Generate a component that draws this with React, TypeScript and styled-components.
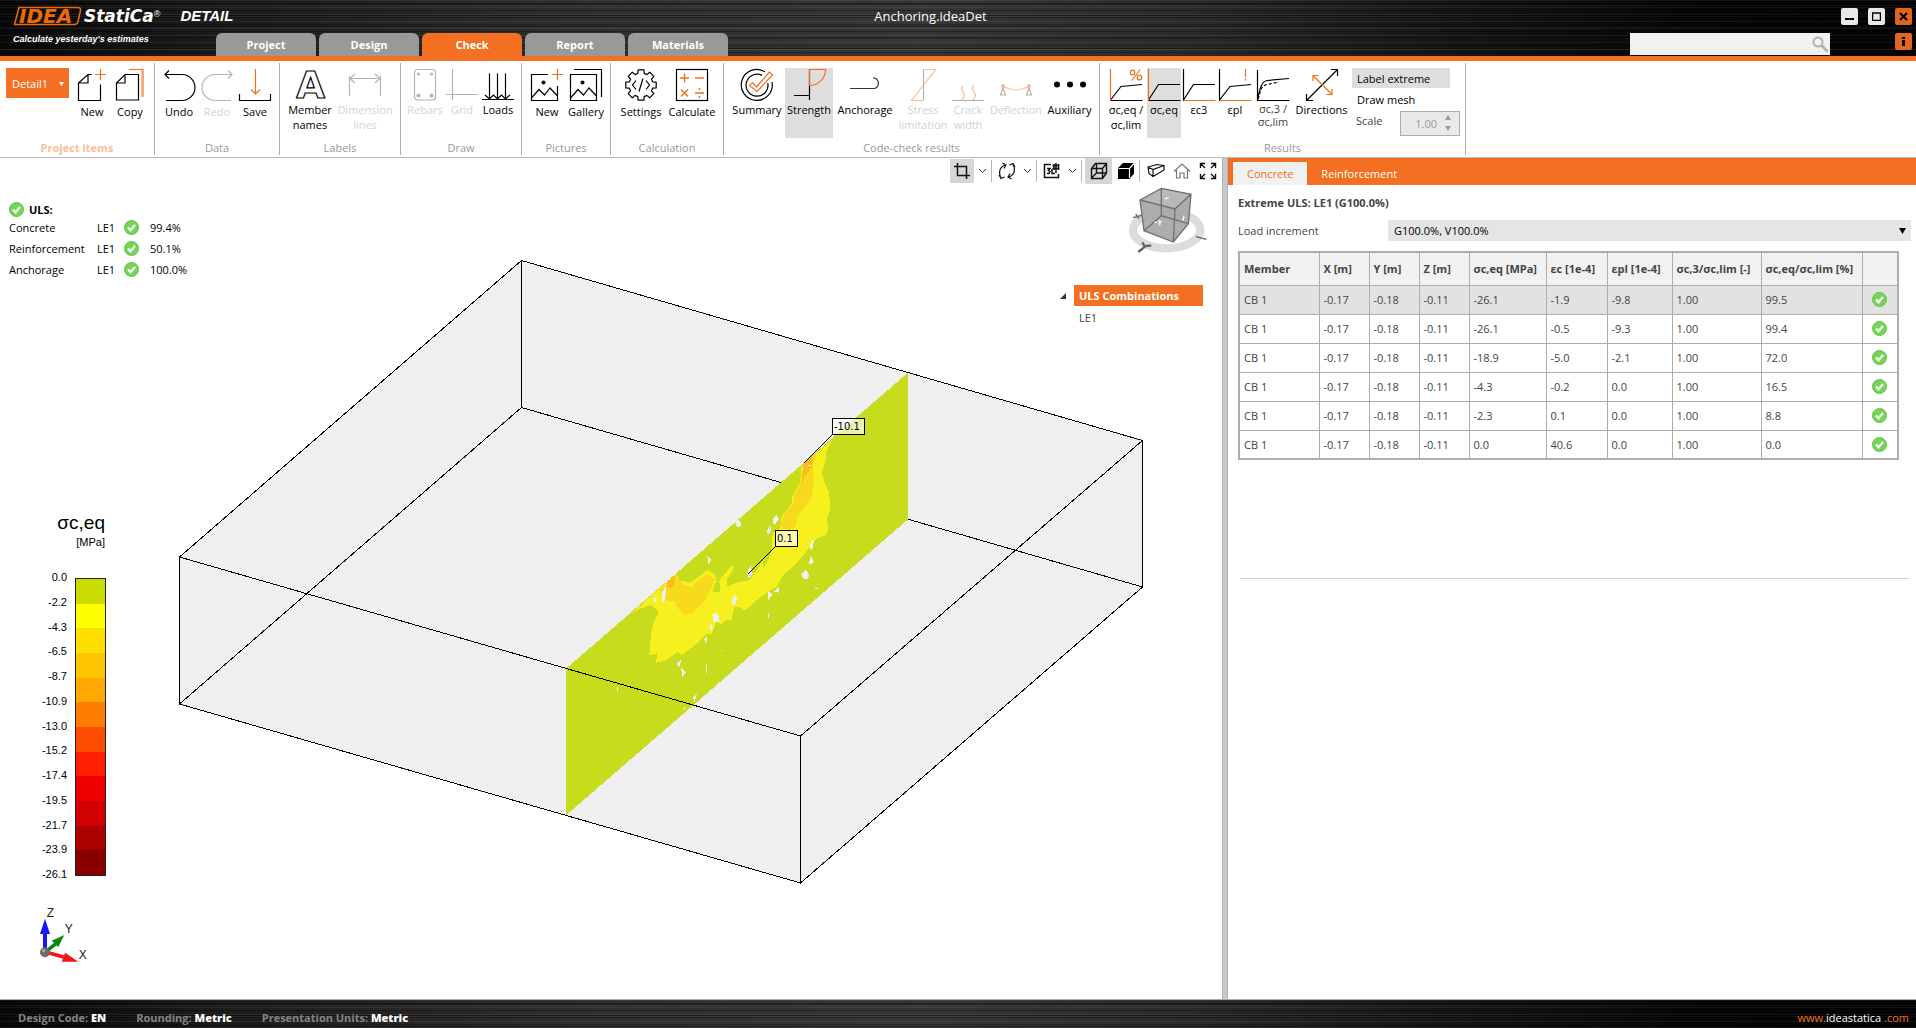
import React from "react";
import styled, { createGlobalStyle, css } from "styled-components";

const ORANGE = "#f36f21";
const PALE = "#f9bf9b";
const UI_FONT = '"Open Sans", "Noto Sans", sans-serif';

const GlobalStyle = createGlobalStyle`
  *, *::before, *::after { box-sizing: border-box; }
  body { margin: 0; background: #fff; color: #000; font: 11px/15px ${UI_FONT}; }
  button, input, select { font: inherit; color: inherit; margin: 0; }
  button { background: none; border: 0; padding: 0; cursor: pointer; }
  svg { display: block; flex: none; }
`;

const brushed = css`
  background:
    repeating-linear-gradient(180deg, rgba(255,255,255,.06) 0 1px, transparent 1px 3px, rgba(0,0,0,.3) 3px 4px, transparent 4px 7px),
    repeating-linear-gradient(180deg, transparent 0 4px, rgba(0,0,0,.4) 4px 5px, rgba(255,255,255,.05) 5px 6px, transparent 6px 11px),
    linear-gradient(90deg, #070707 0%, #1a1a1a 10%, #2e2e2e 30%, #363636 48%, #2a2a2a 62%, #151515 76%, #060606 88%, #030303 100%);
`;

const Page = styled.div`
  display: flex;
  flex-direction: column;
  min-height: 100vh;
`;

/* ---------- header ---------- */
const Header = styled.header`
  ${brushed}
  color: #fff;
  border-bottom: 5px solid ${ORANGE};
`;
const TitleRow = styled.div`
  display: flex;
  height: 33px;
`;
const Brand = styled.div`
  display: flex;
  width: 240px;
  padding: 6px 0 0 13px;
`;
const ProductName = styled.span`
  margin-left: 20px;
  font: italic bold 15px/20px "Liberation Sans", Arial, sans-serif;
`;
const BrandName = styled.span`
  margin-left: 2px;
  font: italic bold 17px/20px "DejaVu Sans", sans-serif;
  sup { font: 9px/9px "Liberation Sans", Arial, sans-serif; vertical-align: 5px; }
`;
const Title = styled.h1`
  flex: 1;
  margin: 0;
  font-size: 13px;
  font-weight: 400;
  line-height: 33px;
  text-align: center;
`;
const WindowControls = styled.div`
  display: flex;
  justify-content: flex-end;
  gap: 10px;
  width: 295px;
  padding: 8px 4px 0 0;
`;
const WindowButton = styled.button<{ $accent?: boolean }>`
  display: grid;
  place-items: center;
  width: 17px;
  height: 17px;
  border-radius: 2px;
  background: ${(p) => (p.$accent ? "#e0651f" : "#e8e8e8")};
`;
const TabRow = styled.div`
  display: flex;
  height: 23px;
`;
const Tagline = styled.div`
  width: 216px;
  padding-left: 13px;
  font: italic bold 9px/12px "Liberation Sans", Arial, sans-serif;
`;
const MainTabs = styled.nav`
  display: flex;
  flex: 1;
  gap: 3px;
`;
const MainTab = styled.button<{ $active?: boolean }>`
  width: 100px;
  border-radius: 6px 6px 0 0;
  background: ${(p) => (p.$active ? ORANGE : "#999")};
  color: #fff;
  font-weight: 700;
`;
const SearchBox = styled.label`
  display: flex;
  align-items: center;
  width: 200px;
  height: 22px;
  padding-right: 1px;
  background: #f1f1f1;
  input { flex: 1; min-width: 0; border: 0; background: none; color: #222; outline: 0; }
`;
const InfoSlot = styled.div`
  width: 86px;
  padding: 0 4px 0 65px;
`;

/* ---------- ribbon ---------- */
const Ribbon = styled.div`
  display: flex;
  height: 97px;
  padding: 2px 0;
  border-bottom: 1px solid #bbb;
`;
const Group = styled.section`
  display: flex;
  flex-direction: column;
  justify-content: space-between;
  height: 92px;
  padding: 5px 5px 0;
  border-right: 1px solid #b0b0b0;
`;
const GroupTools = styled.div`
  display: flex;
`;
const Caption = styled.h2<{ $accent?: boolean }>`
  margin: 0;
  font-size: 11px;
  line-height: 15px;
  font-weight: ${(p) => (p.$accent ? 700 : 400)};
  color: ${(p) => (p.$accent ? PALE : "#999")};
  text-align: center;
`;
const ToolButton = styled.button<{ $w: number; $on?: boolean; $low?: boolean; $dim?: boolean; $tight?: boolean }>`
  display: flex;
  flex-direction: column;
  align-items: center;
  gap: ${(p) => (p.$low ? 3 : 1)}px;
  width: ${(p) => p.$w}px;
  height: 70px;
  padding-top: 1px;
  background: ${(p) => (p.$on ? "#dedede" : "transparent")};
  color: ${(p) => (p.$dim ? "#d2d2d2" : p.$tight ? "#444" : "#000")};
  line-height: ${(p) => (p.$tight ? 13 : 15)}px;
  white-space: nowrap;
  svg { overflow: visible; }
`;
const ItemPicker = styled.label`
  position: relative;
  display: block;
  height: 30px;
  margin: 0 4px 0 1px;
  select {
    width: 63px;
    height: 30px;
    padding: 0 6px;
    appearance: none;
    border: 0;
    background: ${ORANGE};
    color: #fff;
  }
  svg { position: absolute; right: 5px; top: 14px; }
`;
const ResultOptions = styled.div`
  display: flex;
  flex-direction: column;
  width: 108px;
  margin-left: 2px;
`;
const OptionButton = styled.button<{ $on?: boolean }>`
  width: 98px;
  height: ${(p) => (p.$on ? 20 : 23)}px;
  padding-left: 5px;
  text-align: left;
  background: ${(p) => (p.$on ? "#dedede" : "transparent")};
`;
const ScaleRow = styled.label`
  display: flex;
  justify-content: space-between;
  padding-left: 4px;
  color: #444;
  line-height: 20px;
`;
const Spinner = styled.span`
  display: flex;
  width: 60px;
  height: 25px;
  border: 1px solid #adadad;
  background: #e9e9e9;
  input { width: 44px; padding: 0 8px 0 0; border: 0; background: none; color: #9a9a9a; text-align: right; }
`;
const SpinnerArrows = styled.span`
  display: flex;
  flex-direction: column;
  justify-content: space-around;
  padding: 1px 0;
`;

/* ---------- workspace ---------- */
const Workspace = styled.main`
  display: flex;
  flex: 1;
`;
const Viewer = styled.section`
  position: relative;
  display: flex;
  flex: 1222 1 0;
  min-width: 0;
  background: #fff;
`;
const SceneLayer = styled.svg`
  position: absolute;
  inset: 0;
  width: 100%;
  height: 100%;
`;
const Overlay = styled.div`
  position: relative;
  display: flex;
  flex: 1;
  flex-direction: column;
  justify-content: space-between;
`;
const ViewToolbar = styled.div`
  display: flex;
  align-items: center;
  justify-content: flex-end;
  height: 26px;
  padding-right: 1px;
`;
const ViewButton = styled.button<{ $w?: number; $on?: boolean }>`
  display: grid;
  place-items: center;
  width: ${(p) => p.$w ?? 24}px;
  height: ${(p) => ((p.$w ?? 24) > 24 ? 26 : 24)}px;
  background: ${(p) => (p.$on ? "#d6d6d6" : "transparent")};
`;
const ChevronButton = styled.button`
  display: grid;
  place-items: center;
  width: 17px;
  height: 24px;
`;
const Divider = styled.span`
  width: 1px;
  height: 22px;
  margin-right: 3px;
  background: #b4b4b4;
`;
const TopArea = styled.div`
  display: flex;
  justify-content: space-between;
`;
const Summary = styled.div`
  padding: 18px 0 0 9px;
`;
const SummaryHead = styled.div`
  display: flex;
  gap: 5px;
  height: 15px;
  font-weight: 700;
`;
const SummaryRow = styled.div`
  display: grid;
  grid-template-columns: 88px 27px 26px auto;
  align-items: center;
  height: 21px;
`;
const RightTools = styled.div`
  display: flex;
  flex-direction: column;
  align-items: flex-end;
  padding: 2px 14px 0 0;
`;
const Combos = styled.div`
  display: grid;
  grid-template-columns: 14px 129px;
  align-items: center;
  margin: 31px 5px 0 0;
`;
const ComboHead = styled.button`
  grid-column: 2;
  height: 21px;
  padding-left: 5px;
  background: ${ORANGE};
  color: #fff;
  font-weight: 700;
  text-align: left;
`;
const ComboItem = styled.button`
  grid-column: 2;
  height: 23px;
  padding-left: 5px;
  color: #444;
  text-align: left;
`;
const LegendArea = styled.div`
  padding: 0 0 34px 37px;
  font-family: "Liberation Sans", Arial, sans-serif;
`;
const LegendTitle = styled.div`
  width: 68px;
  text-align: right;
  font-size: 19px;
  line-height: 24px;
  small { display: block; font-size: 11px; line-height: 15px; }
`;
const LegendBody = styled.div`
  display: flex;
  gap: 8px;
  margin-top: 20px;
`;
const LegendLabels = styled.ol`
  display: flex;
  flex-direction: column;
  justify-content: space-between;
  width: 30px;
  height: 312px;
  margin: 0;
  padding: 0;
  list-style: none;
  text-align: right;
`;
const LegendBar = styled.div`
  display: flex;
  flex-direction: column;
  width: 31px;
  height: 298px;
  margin-top: 8px;
  border: 1px solid #222;
`;
const Swatch = styled.div<{ $c: string }>`
  flex: 1;
  background: ${(p) => p.$c};
`;
const Triad = styled.svg`
  margin-top: 26px;
  overflow: visible;
`;
const Splitter = styled.div`
  width: 6px;
  background: #c9c9c9;
  border: solid #b3b3b3;
  border-width: 0 1px;
`;

/* ---------- results panel ---------- */
const Panel = styled.aside`
  flex: 688 1 0;
  min-width: 0;
  color: #444;
`;
const PanelTabs = styled.nav`
  display: flex;
  height: 27px;
  padding: 4px 0 0 5px;
  background: ${ORANGE};
`;
const PanelTab = styled.button<{ $active?: boolean }>`
  padding: 0 14px;
  background: ${(p) => (p.$active ? "#f1f1f1" : "transparent")};
  color: ${(p) => (p.$active ? ORANGE : "#fff")};
`;
const PanelBody = styled.div`
  padding: 10px 5px 0 10px;
`;
const PanelHeading = styled.h2`
  margin: 0;
  font-size: 11px;
  line-height: 15px;
`;
const LoadRow = styled.label`
  display: flex;
  align-items: center;
  margin-top: 10px;
  > span:first-child { width: 150px; }
`;
const SelectWrap = styled.span`
  position: relative;
  flex: 1;
  select {
    display: block;
    width: 100%;
    height: 21px;
    padding: 0 6px;
    appearance: none;
    border: 0;
    background: #e5e5e5;
    color: #000;
  }
  svg { position: absolute; right: 5px; top: 8px; }
`;
const ResultTable = styled.table`
  width: 659px;
  margin-top: 10px;
  border: 2px solid #adadad;
  border-collapse: collapse;
  table-layout: fixed;
  th, td { border: 1px solid #adadad; padding: 0 4px; text-align: left; white-space: nowrap; }
  th { height: 33px; background: #f1f1f1; }
  td { height: 29px; }
  td svg { margin: 0 auto; }
`;
const BodyRow = styled.tr<{ $selected: boolean }>`
  background: ${(p) => (p.$selected ? "#e2e2e2" : "#fff")};
`;
const Rule = styled.hr`
  margin: 118px 2px 0;
  border: 0;
  border-top: 1px solid #d0d0d0;
`;

/* ---------- footer ---------- */
const Footer = styled.footer`
  ${brushed}
  display: flex;
  align-items: center;
  gap: 30px;
  height: 29px;
  padding: 6px 7px 0 18px;
  border-top: 1px solid #aaa;
  color: #858585;
  font-weight: 700;
  b { color: #fff; }
`;
const SiteLink = styled.a`
  margin-left: auto;
  color: ${ORANGE};
  font-weight: 400;
  text-decoration: none;
  span { color: #fff; }
`;

/* ---------- icons ---------- */
const Ico = ({ c = "#000", children }: { c?: string; children: React.ReactNode }) => (
  <svg width="32" height="32" viewBox="0 0 32 32" fill="none" stroke={c} strokeWidth="1.2" aria-hidden="true">{children}</svg>
);
const G = "#b4b4b4";
const gearPath = (() => {
  const pts: string[] = [];
  for (let i = 0; i < 8; i++) {
    const a = (i * Math.PI) / 4 - Math.PI / 2;
    [[-0.27, 12], [-0.19, 15.5], [0.19, 15.5], [0.27, 12]].forEach(([d, r]) =>
      pts.push(`${(16 + r * Math.cos(a + d)).toFixed(1)} ${(16 + r * Math.sin(a + d)).toFixed(1)}`)
    );
  }
  return `M${pts.join("L")}Z`;
})();
const picture = <><path d="M.5 29L8 20.500l5.500 5.500L19 19l7.500 8" /><circle cx="12.500" cy="13.500" r="2" fill="#000" stroke="none" /></>;

const icons: Record<string, React.ReactNode> = {
  newDoc: <Ico><path d="M15.500 5.500H12L2.500 14v17.500h22V15.500M12 5.500V14H2.500" /><path d="M24.500 0v11M19 5.500h11" stroke={ORANGE} /></Ico>,
  copy: <Ico><path d="M24.500 5.500H11L2.500 14v17h22zM11 5.500V14H2.500" /><path d="M15 .500h14V28" stroke={ORANGE} /><path d="M27.500 1v27" stroke={PALE} /></Ico>,
  undo: <Ico><path d="M2 5.500h17a13 13 0 0 1 0 26H3M6 1.500l-4 4 4 4" /></Ico>,
  redo: <Ico c={G}><path d="M31 5.500H14a13 13 0 0 0 0 26h16M27 1.500l4 4-4 4" /></Ico>,
  save: <Ico><path d="M.500 25v6.500h31V25" /><path d="M16.500 0v25M12 20.500l4.500 4.500 4.500-4.500" stroke={ORANGE} /></Ico>,
  member: <Ico><text x="16.500" y="29" textAnchor="middle" fontFamily="DejaVu Sans" fontWeight="700" fontSize="37">A</text></Ico>,
  dimension: <Ico c={G}><path d="M.500 7v20M31.500 7v20M1 9.500h30M6 5L1 9.500 6 14M26 5l5 4.500-5 4.500" /></Ico>,
  rebars: <Ico c={G}><rect x="5.500" y=".500" width="21" height="30.500" rx="3" /><circle cx="9.500" cy="5" r="1" /><circle cx="22.500" cy="5" r="1" /><circle cx="9.500" cy="26.500" r="1.500" fill={G} /><circle cx="22.500" cy="26.500" r="1.500" fill={G} /></Ico>,
  grid: <Ico c={G}><path d="M6.500 0v31M0 25.500h32" /></Ico>,
  loads: <Ico><path d="M0 30.500h32M7.500 4.500v25M15.500 4.500v25M23.500 4.500v25M3 26l4.500 4 4-4 4 4 4-4 4 4 4.500-4" /></Ico>,
  picNew: <Ico><path d="M17 5.500H.500v26h26V17" />{picture}<path d="M26.500 0v11M21 5.500h11" stroke={ORANGE} /></Ico>,
  gallery: <Ico><path d="M.500 5.500h26v26H.500zM4 .500h27.500V28" />{picture}</Ico>,
  settings: <Ico><path d={gearPath} strokeLinejoin="round" /><path d="M11 11.500L7.500 16l3.500 4.500M21 11.500l3.500 4.500-3.500 4.500M18 9.500l-4 13" /></Ico>,
  calculate: <Ico><rect x=".500" y=".500" width="31" height="31" /><path d="M8.500 4.500v9M4 9h9M19 9h9M5 20.500l7 7M12 20.500l-7 7M19 24h9M23.500 19v2M23.500 27v2" stroke={ORANGE} strokeWidth="1.400" /></Ico>,
  summary: <Ico><path d="M24 2.800A15.500 15.500 0 1 0 31 13M21 6.400A11 11 0 1 0 26.800 14" /><path d="M8.500 16.500l3-3 4 4.500L28.500 3l3 3L16 22.500z" stroke={ORANGE} /></Ico>,
  strength: <Ico><path d="M16.500 0v31M1 26.500h15.500" /><path d="M16.500 .500h16a16 16 0 0 1-16 16z" stroke={ORANGE} /></Ico>,
  anchorage: <Ico><path d="M1 19.500h24.500a5.500 5.500 0 0 0 0-10.500H24" stroke="#333" /></Ico>,
  stress: <Ico c={PALE}><path d="M16.500 .500h12l-24 31h12" /><path d="M16.500 0v31" stroke={G} /></Ico>,
  crack: <Ico c={PALE}><path d="M11 17q-3 3 0 6t-1 8M22 16q-3 3.500 0 7t-1 8" /><path d="M0 31.500h32" stroke={G} /></Ico>,
  deflection: <Ico c={PALE}><path d="M3 17q13 8 26 0" /><circle cx="3" cy="17" r="1.500" fill={PALE} /><circle cx="29" cy="17" r="1.500" fill={PALE} /><path d="M3 19l-2.500 7h5zM29 19l-2.500 7h5z" stroke={G} /></Ico>,
  auxiliary: <Ico><g fill="#000" stroke="none"><circle cx="3" cy="15.500" r="3" /><circle cx="16" cy="15.500" r="3" /><circle cx="29" cy="15.500" r="3" /></g></Ico>,
  ratio: <Ico><path d="M.500 31L11 17.500 32 15.500M.500 31.500h32" /><path d="M.500 0v31" stroke={ORANGE} /><g stroke={ORANGE}><circle cx="22.500" cy="3.500" r="2.300" /><circle cx="29.500" cy="8.500" r="2.300" /><path d="M30 .500l-8 11" /></g></Ico>,
  sigma: <Ico><path d="M.500 31L10.500 15.500H32M.500 31.500h32" /><path d="M.500 0v31" stroke={ORANGE} /></Ico>,
  epsC: <Ico><path d="M.500 0v31L10.500 15.500H32" /><path d="M.500 31.500h32" stroke={ORANGE} /></Ico>,
  epsPl: <Ico><path d="M.500 0v31L11 17.500 32 15.500" /><path d="M.500 31.500h32M26.500 0v8M26.500 9.500v2" stroke={ORANGE} /></Ico>,
  limit: <Ico><path d="M.500 1v30.500h32M.500 31C3 18 5 12.500 10 11.500L32 9.500" /><path d="M1 30c3-8 2-13 9-14.500L22 13" strokeDasharray="3 2" /></Ico>,
  directions: <Ico><path d="M.500 31.500L31.500 .500M.500 25v6.500H7M25 .500h6.500V7" /><path d="M7 6.500L26 25.500M7 12V6.500h5.500M26 20v5.500h-5.500" stroke={ORANGE} /></Ico>,
};

const Check = () => (
  <svg width="15" height="15" viewBox="0 0 15 15" role="img" aria-label="OK">
    <circle cx="7.500" cy="7.500" r="7" fill="#76d552" stroke="#62bf55" />
    <path d="M4 7.500l2.500 2.800L11 5" fill="none" stroke="#fff" strokeWidth="2.200" />
  </svg>
);
const Down = ({ c, w = 7 }: { c: string; w?: number }) => (
  <svg width={w} height={w} viewBox="0 0 7 7" aria-hidden="true"><path d="M0 0h7L3.500 6z" fill={c} /></svg>
);
const Chevron = () => (
  <ChevronButton aria-label="More">
    <svg width="9" height="6" viewBox="0 0 9 6" fill="none" stroke="#333"><path d="M1 1l3.500 3.500L8 1" /></svg>
  </ChevronButton>
);
const V = ({ children, c = "#111" }: { children: React.ReactNode; c?: string }) => (
  <svg width="18" height="18" viewBox="0 0 18 18" fill="none" stroke={c} strokeWidth="1.200" aria-hidden="true">{children}</svg>
);

/* ---------- data ---------- */
type Tool = { icon: string; label: string[]; w: number; low?: boolean; dim?: boolean; on?: boolean; tight?: boolean };
const t = (icon: string, label: string, w: number, o: Partial<Tool> = {}): Tool => ({ icon, label: label.split("|"), w, ...o });
const low = { low: true };
const dim = { dim: true };

const groups: { name: string; tools: Tool[] }[] = [
  { name: "Project items", tools: [t("newDoc", "New", 38, low), t("copy", "Copy", 38, low)] },
  { name: "Data", tools: [t("undo", "Undo", 38, low), t("redo", "Redo", 38, { low: true, dim: true }), t("save", "Save", 38, low)] },
  { name: "Labels", tools: [t("member", "Member|names", 50), t("dimension", "Dimension|lines", 60, dim)] },
  { name: "Draw", tools: [t("rebars", "Rebars", 38, dim), t("grid", "Grid", 36, dim), t("loads", "Loads", 36)] },
  { name: "Pictures", tools: [t("picNew", "New", 40, low), t("gallery", "Gallery", 38, low)] },
  { name: "Calculation", tools: [t("settings", "Settings", 50, low), t("calculate", "Calculate", 52, low)] },
  {
    name: "Code-check results",
    tools: [
      t("summary", "Summary", 56), t("strength", "Strength", 48, { on: true }), t("anchorage", "Anchorage", 64),
      t("stress", "Stress|limitation", 52, dim), t("crack", "Crack|width", 38, dim), t("deflection", "Deflection", 58, dim),
      t("auxiliary", "Auxiliary", 49),
    ],
  },
  {
    name: "Results",
    tools: [
      t("ratio", "σc,eq /|σc,lim", 42), t("sigma", "σc,eq", 34, { on: true }), t("epsC", "εc3", 36), t("epsPl", "εpl", 36),
      t("limit", "σc,3 /|σc,lim", 40, { tight: true }), t("directions", "Directions", 57),
    ],
  },
];

const legend = ["#c8dc00", "#ffff00", "#ffdf00", "#ffc600", "#ffa800", "#ff7e00", "#ff4d00", "#ff1e00", "#f20000", "#d20000", "#ad0000", "#8a0000"];
const legendLabels = ["0.0", "-2.2", "-4.3", "-6.5", "-8.7", "-10.9", "-13.0", "-15.2", "-17.4", "-19.5", "-21.7", "-23.9", "-26.1"];

const columns: [string, number][] = [
  ["Member", 80], ["X [m]", 50], ["Y [m]", 50], ["Z [m]", 50], ["σc,eq [MPa]", 77], ["εc [1e-4]", 61],
  ["εpl [1e-4]", 65], ["σc,3/σc,lim [-]", 89], ["σc,eq/σc,lim [%]", 101], ["", 36],
];
const rows = [
  ["-26.1", "-1.9", "-9.8", "99.5"], ["-26.1", "-0.5", "-9.3", "99.4"], ["-18.9", "-5.0", "-2.1", "72.0"],
  ["-4.3", "-0.2", "0.0", "16.5"], ["-2.3", "0.1", "0.0", "8.8"], ["0.0", "40.6", "0.0", "0.0"],
];

const voids = [
  "555,490 563,478 575,488 570,502 560,500", "668,478 680,465 686,478 676,492 668,490", "650,515 658,498 666,508 655,524",
  "472,586 485,600 474,614", "593,632 602,618 608,640 598,656 592,645", "545,722 553,706 562,712 555,735 545,732",
  "487,765 500,758 508,772 506,788 490,785", "478,800 486,790 488,805 482,815", "463,838 472,828 468,852",
  "783,545 793,538 786,572 779,566", "776,610 783,588 792,605 780,614", "753,642 768,628 777,645 774,658 760,655",
  "655,695 668,702 655,720", "672,695 688,680 688,698", "380,912 392,898 391,925", "394,925 407,938 396,952",
  "428,1012 440,1003 435,1024", "400,1045 405,1040 402,1056", "336,700 350,670 345,722 338,732", "310,715 322,712 314,732",
  "468,912 471,912 471,938 468,938", "201,980 204,980 204,992 201,992", "773,314 783,314 783,318 773,318",
  "512,865 516,872 512,872", "652,768 662,752 655,775", "795,683 804,683 804,687 795,687",
];

const Scene = () => (
  <SceneLayer viewBox="0 158 1222 841" role="img" aria-label="Concrete block with stress section">
    <path d="M521 260.500L1142.500 440V587L800.500 883 179.500 704V557z" fill="#efefef" />
    <g fill="none" stroke="#000" shapeRendering="crispEdges">
      <path d="M521.500 260.500L1142.500 440.500V587L800.500 883 179.500 704V557zM521.500 260.500V407.500M179.500 704L521.500 407.500 1142.500 587" />
    </g>
    <g transform="translate(550 360) scale(.33333)" shapeRendering="crispEdges">
      <path d="M48 926L1074 38V478L48 1366z" fill="#c8dc1e" />
      <path fill="#f6f01e" d="M240 765L290 720 332 683 378 640 390 662 420 668 440 655 472 630 492 642 500 660 488 690 495 697 510 695 508 660 525 640 535 628 553 612 550 628 532 655 530 680 560 668 600 660 620 630 640 600 640 625 655 600 665 570 668 520 690 505 695 470 725 430 728 405 750 370 755 318 847 238 828 275 826 310 815 335 825 370 838 400 840 450 830 480 835 505 828 525 800 535 780 560 765 580 740 610 700 645 680 680 640 705 615 725 585 752 570 742 552 742 545 778 525 782 510 798 505 770 485 822 470 822 445 848 395 885 385 875 345 902 318 908 322 880 298 885 303 820 310 790 325 760 320 748 302 735 265 748z" />
      <path fill="#f7da1e" d="M328 690L385 655 400 675 425 680 445 660 472 642 495 658 480 690 465 725 440 742 430 757 402 766 380 740 378 725 345 722zM757 345L770 300 800 278 788 320 792 365 785 410 765 440 745 465 735 505 698 508 690 495 705 460 730 430 732 405 750 375z" />
      <path fill="#f6bf1e" d="M348 680L350 665 378 645 375 670 365 685zM760 310L785 285 785 322 765 350 752 372 757 340z" />
      <g fill="#efefef">{voids.map((p) => <polygon key={p} points={p} />)}</g>
    </g>
    <g fill="none" stroke="#000" shapeRendering="crispEdges">
      <path d="M179.500 557L800.500 736 1142.500 440.500M800.500 736V883" />
      <path d="M803.500 463.500L832.500 434.500M747.500 574.500L775.500 546.500" />
      <rect x="832.500" y="418.500" width="32" height="16" fill="#fff" fillOpacity=".65" />
      <rect x="775.500" y="530.500" width="22" height="16" fill="#fff" fillOpacity=".65" />
    </g>
    <g fontFamily="DejaVu Sans" fontSize="10">
      <text x="834" y="430">-10.1</text>
      <text x="777" y="542">0.1</text>
    </g>
  </SceneLayer>
);

const NavCube = () => (
  <svg width="80" height="68" viewBox="685 108 240 204" fill="none" aria-label="Orientation cube">
    <ellipse cx="801" cy="240" rx="101" ry="55" stroke="#dcdcdc" strokeWidth="25" />
    <path d="M785 115l89 18-8 88-45 55-88-34-12-92z" fill="#a9a9a9" fillOpacity=".95" />
    <path d="M785 115l89 18-48 44-105-27z" fill="#b8b8b8" />
    <path d="M785 115l89 18-8 88-45 55-88-34-12-92zM721 150l105 27 48-44M826 177l-5 99M785 115v82l81 24M785 197l-52 45" stroke="#707070" strokeWidth="4" />
    <path d="M700 203l26-7M708 192l10 14M889 260l31 8" stroke="#666" strokeWidth="4" />
    <path d="M716 306l22-18 17-1M728 277l8 14" stroke="#666" strokeWidth="7" />
    <path d="M795 147l12-5M850 212l3-14M764 217h8M777 210l4 16M785 213l-6 8" stroke="#fff" strokeWidth="4" />
  </svg>
);

export default function App() {
  return (
    <Page>
      <GlobalStyle />
      <Header>
        <TitleRow>
          <Brand>
            <svg width="69" height="20" viewBox="0 0 69 20" aria-hidden="true">
              <path d="M6 1.500h59q3 0 2.500 3L65 15.500q-.500 3-3.500 3H1.500z" fill="none" stroke="#ec6a0c" strokeWidth="1.500" />
              <text x="6" y="17" fill="#ec6a0c" fontFamily="DejaVu Sans" fontStyle="italic" fontWeight="700" fontSize="20">IDEA</text>
            </svg>
            <BrandName>StatiCa<sup>®</sup></BrandName>
            <ProductName>DETAIL</ProductName>
          </Brand>
          <Title>Anchoring.ideaDet</Title>
          <WindowControls>
            <WindowButton aria-label="Minimize"><svg width="9" height="9"><path d="M0 6h9v2H0z" /></svg></WindowButton>
            <WindowButton aria-label="Maximize"><svg width="9" height="9"><path d="M.500 1h8v7.500h-8z" fill="none" stroke="#000" strokeWidth="1.500" /></svg></WindowButton>
            <WindowButton aria-label="Close" $accent><svg width="9" height="9"><path d="M1 1l7 7M8 1L1 8" stroke="#000" strokeWidth="2" /></svg></WindowButton>
          </WindowControls>
        </TitleRow>
        <TabRow>
          <Tagline>Calculate yesterday's estimates</Tagline>
          <MainTabs>
            {["Project", "Design", "Check", "Report", "Materials"].map((n) => (
              <MainTab key={n} $active={n === "Check"}>{n}</MainTab>
            ))}
          </MainTabs>
          <SearchBox>
            <input type="search" aria-label="Search" />
            <svg width="17" height="17" viewBox="0 0 17 17" fill="none" stroke="#b0b0b0"><circle cx="6" cy="6" r="4.500" strokeWidth="2" /><path d="M9.500 9.500l6 6" strokeWidth="2.500" /></svg>
          </SearchBox>
          <InfoSlot>
            <WindowButton aria-label="Info" $accent><svg width="3" height="9"><path d="M0 0h3v2H0zM0 3h3v6H0z" /></svg></WindowButton>
          </InfoSlot>
        </TabRow>
      </Header>

      <Ribbon>
        {groups.map((g, i) => (
          <Group key={g.name}>
            <GroupTools>
              {i === 0 && (
                <ItemPicker>
                  <select aria-label="Project item"><option>Detail1</option></select>
                  <Down c="#fff" w={5} />
                </ItemPicker>
              )}
              {g.tools.map((x) => (
                <ToolButton key={x.icon} $w={x.w} $on={x.on} $low={x.low} $dim={x.dim} $tight={x.tight} disabled={x.dim}>
                  {icons[x.icon]}
                  <span>{x.label.map((l, k) => <React.Fragment key={l}>{k > 0 && <br />}{l}</React.Fragment>)}</span>
                </ToolButton>
              ))}
              {g.name === "Results" && (
                <ResultOptions>
                  <OptionButton $on>Label extreme</OptionButton>
                  <OptionButton>Draw mesh</OptionButton>
                  <ScaleRow>
                    Scale
                    <Spinner>
                      <input type="text" defaultValue="1.00" disabled />
                      <SpinnerArrows>
                        <svg width="7" height="6"><path d="M0 5h6L3 0z" fill="#999" /></svg>
                        <svg width="7" height="6"><path d="M0 0h6L3 5z" fill="#999" /></svg>
                      </SpinnerArrows>
                    </Spinner>
                  </ScaleRow>
                </ResultOptions>
              )}
            </GroupTools>
            <Caption $accent={i === 0}>{g.name}</Caption>
          </Group>
        ))}
      </Ribbon>

      <Workspace>
        <Viewer>
          <Scene />
          <Overlay>
            <div>
              <ViewToolbar>
                <ViewButton $on aria-label="Clip"><V><path d="M4.500 1v12.500H17M1 4.500h12.500V17" strokeWidth="1.500" /></V></ViewButton>
                <Chevron /><Divider />
                <ViewButton aria-label="Rotate"><V><path d="M3 16C0 10 2 4 8 3M4.500 1l3.500 2-2 3.500M15 2c3 6 1 12-5 13M13.500 17L10 15l2-3.500M1 13l2 3.500L6.500 15M17 5l-2-3.500L11.500 3" /></V></ViewButton>
                <Chevron /><Divider />
                <ViewButton aria-label="Labels"><V><path d="M8 2.500H1.500v13h14V12M4 6.500h3l-1.500 2 1.500 1-1 2H4M9 7v4.500h3M13 1v10M9.500 3.500h7M9.500 6.500h7M11 2v6M15.500 2v6" strokeWidth="1.500" /></V></ViewButton>
                <Chevron /><Divider />
                <ViewButton $w={27} $on aria-label="Wireframe"><V><path d="M1.500 6.500l4-5h11v9.500l-4 5.500h-11zM1.500 6.500h11v10M12.500 6.500l4-5M6.500 2v9h10M6.500 11l-5 5" strokeWidth="1.400" /></V></ViewButton>
                <ViewButton $w={27} aria-label="Solid"><V><path d="M1 6l5-5h11v10.500L12.500 17H1z" fill="#000" stroke="none" /><path d="M1.500 6.500h11V16M12.500 6.500L17 1.500" stroke="#fff" /></V></ViewButton>
                <Divider />
                <ViewButton $w={26} aria-label="Perspective"><V><path d="M1 5L10 2.500l7 1v4.500L6 14.500 2 11.500zM1 5l5 2.500 11-4M6 7.500v7" /></V></ViewButton>
                <ViewButton $w={26} aria-label="Home"><V c="#777"><path d="M1 9.500L9 2l8 7.500M3.500 8v8H7v-5h4v5h3.500V8" /></V></ViewButton>
                <ViewButton $w={26} aria-label="Fit"><V><path d="M1.500 6V1.500H6M1.500 1.500L6 6M12 1.500h4.500V6M16.500 1.500L12 6M1.500 12v4.500H6M1.500 16.500L6 12M12 16.500h4.500V12M16.500 16.500L12 12" strokeWidth="1.400" /></V></ViewButton>
              </ViewToolbar>
              <TopArea>
                <Summary>
                  <SummaryHead><Check />ULS:</SummaryHead>
                  {[["Concrete", "99.4%"], ["Reinforcement", "50.1%"], ["Anchorage", "100.0%"]].map(([n, v]) => (
                    <SummaryRow key={n}><span>{n}</span><span>LE1</span><Check /><span>{v}</span></SummaryRow>
                  ))}
                </Summary>
                <RightTools>
                  <NavCube />
                  <Combos>
                    <svg width="6" height="6"><path d="M6 0v6H0z" fill="#333" /></svg>
                    <ComboHead>ULS Combinations</ComboHead>
                    <ComboItem>LE1</ComboItem>
                  </Combos>
                </RightTools>
              </TopArea>
            </div>
            <LegendArea>
              <LegendTitle>σc,eq<small>[MPa]</small></LegendTitle>
              <LegendBody>
                <LegendLabels>{legendLabels.map((l) => <li key={l}>{l}</li>)}</LegendLabels>
                <LegendBar>{legend.map((c) => <Swatch key={c} $c={c} />)}</LegendBar>
              </LegendBody>
              <Triad width="54" height="57" viewBox="114 1224 162 171" aria-label="Axes">
                <path d="M138 1350V1300" stroke="#1414ff" strokeWidth="12" /><path d="M123 1302l15-46 15 46z" fill="#1414ff" />
                <path d="M140 1355l32-25" stroke="#0a870f" strokeWidth="11" /><path d="M158 1322l38-17-18 36z" fill="#0a870f" />
                <path d="M142 1357l52 14" stroke="#f51414" strokeWidth="11" /><path d="M198 1358l40 27h-50z" fill="#f51414" />
                <circle cx="138" cy="1357" r="15" fill="#6a6a6a" /><circle cx="134" cy="1352" r="5" fill="#aaa" />
                <g fontSize="36" fill="#222"><text x="143" y="1251">Z</text><text x="197" y="1298">Y</text><text x="239" y="1377">X</text></g>
              </Triad>
            </LegendArea>
          </Overlay>
        </Viewer>
        <Splitter />
        <Panel>
          <PanelTabs>
            <PanelTab $active>Concrete</PanelTab>
            <PanelTab>Reinforcement</PanelTab>
          </PanelTabs>
          <PanelBody>
            <PanelHeading>Extreme ULS: LE1 (G100.0%)</PanelHeading>
            <LoadRow>
              <span>Load increment</span>
              <SelectWrap>
                <select><option>G100.0%, V100.0%</option></select>
                <Down c="#000" />
              </SelectWrap>
            </LoadRow>
            <ResultTable>
              <colgroup>{columns.map(([n, w]) => <col key={n} width={w} />)}</colgroup>
              <thead><tr>{columns.map(([n]) => <th key={n}>{n}</th>)}</tr></thead>
              <tbody>
                {rows.map(([s, e, p, u], i) => (
                  <BodyRow key={i} $selected={i === 0}>
                    {["CB 1", "-0.17", "-0.18", "-0.11", s, e, p, "1.00", u].map((v, k) => <td key={k}>{v}</td>)}
                    <td><Check /></td>
                  </BodyRow>
                ))}
              </tbody>
            </ResultTable>
            <Rule />
          </PanelBody>
        </Panel>
      </Workspace>

      <Footer>
        <span>Design Code: <b>EN</b></span>
        <span>Rounding: <b>Metric</b></span>
        <span>Presentation Units: <b>Metric</b></span>
        <SiteLink href="#">www.<span>ideastatica</span> .com</SiteLink>
      </Footer>
    </Page>
  );
}
